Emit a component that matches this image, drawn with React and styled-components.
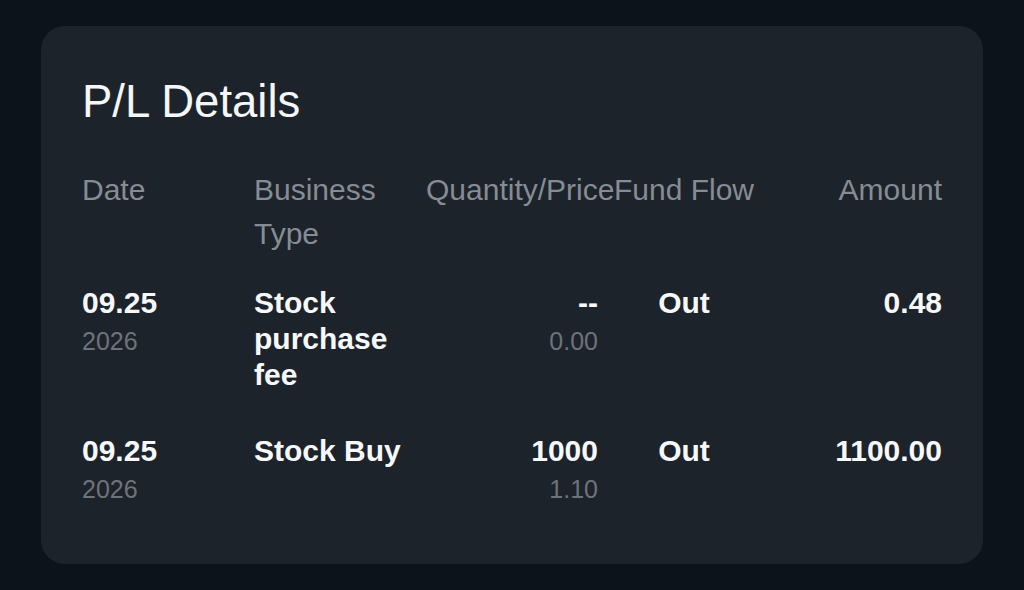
import styled, { createGlobalStyle } from "styled-components";

const GlobalStyle = createGlobalStyle`
  html, body {
    margin: 0;
    padding: 0;
    background: #0c131a;
  }
  body {
    font-family: "Liberation Sans", Arial, Helvetica, sans-serif;
  }
`;

const Page = styled.div`
  min-height: 590px;
  box-sizing: border-box;
  padding: 26px 41px;
  background: #0c131a;
`;

const Card = styled.section`
  background: #1d232b;
  border-radius: 24px;
  padding: 50px 41px 59px;
`;

const Title = styled.h1`
  margin: 0 0 40px;
  font-size: 45.5px;
  line-height: 52px;
  font-weight: 400;
  color: #f4f6f8;
`;

const Row = styled.div`
  display: grid;
  grid-template-columns: repeat(5, minmax(0, 1fr));
  margin-bottom: ${(p) => p.$space}px;
`;

const HeadCell = styled.div`
  font-size: 30px;
  line-height: 44px;
  color: #868c93;
  text-align: ${(p) => p.$align || "left"};
`;

const Cell = styled.div`
  text-align: ${(p) => p.$align || "left"};
`;

const Main = styled.div`
  font-size: 30px;
  line-height: 36px;
  font-weight: 700;
  color: #f7f8f9;
  padding-right: ${(p) => (p.$wrap ? "8px" : "0")};
`;

const Sub = styled.div`
  margin-top: 4px;
  font-size: 25px;
  line-height: 32px;
  color: #6d737a;
`;

const columns = [
  { label: "Date", align: "left" },
  { label: "Business Type", align: "left" },
  { label: "Quantity/Price", align: "right" },
  { label: "Fund Flow", align: "center" },
  { label: "Amount", align: "right" },
];

const records = [
  {
    date: "09.25",
    year: "2026",
    type: "Stock purchase fee",
    qty: "--",
    price: "0.00",
    flow: "Out",
    amount: "0.48",
  },
  {
    date: "09.25",
    year: "2026",
    type: "Stock Buy",
    qty: "1000",
    price: "1.10",
    flow: "Out",
    amount: "1100.00",
  },
];

export default function App() {
  return (
    <Page>
      <GlobalStyle />
      <Card>
        <Title>P/L Details</Title>
        <Row $space={29}>
          {columns.map((c) => (
            <HeadCell key={c.label} $align={c.align}>
              {c.label}
            </HeadCell>
          ))}
        </Row>
        {records.map((r, i) => (
          <Row key={i} $space={i === records.length - 1 ? 0 : 40}>
            <Cell>
              <Main>{r.date}</Main>
              <Sub>{r.year}</Sub>
            </Cell>
            <Cell>
              <Main $wrap>{r.type}</Main>
            </Cell>
            <Cell $align="right">
              <Main>{r.qty}</Main>
              <Sub>{r.price}</Sub>
            </Cell>
            <Cell $align="center">
              <Main>{r.flow}</Main>
            </Cell>
            <Cell $align="right">
              <Main>{r.amount}</Main>
            </Cell>
          </Row>
        ))}
      </Card>
    </Page>
  );
}
